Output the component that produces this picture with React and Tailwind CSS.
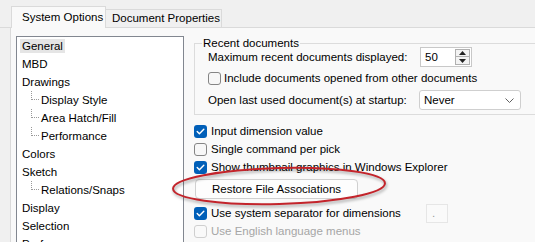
import React from 'react';

const treeItems = [
  { label: 'General', selected: true },
  { label: 'MBD' },
  { label: 'Drawings' },
  { label: 'Display Style', sub: true },
  { label: 'Area Hatch/Fill', sub: true },
  { label: 'Performance', sub: true },
  { label: 'Colors' },
  { label: 'Sketch' },
  { label: 'Relations/Snaps', sub: true },
  { label: 'Display' },
  { label: 'Selection' },
  { label: 'Performance' },
  { label: 'Assemblies' },
];

const CheckBox = ({ checked, disabled }) => {
  if (checked) {
    return (
      <span className="w-[13px] h-[13px] rounded-[3px] bg-[#005fb8] flex items-center justify-center shrink-0">
        <svg width="13" height="13" viewBox="0 0 13 13">
          <path d="M3.2 6.6 L5.4 8.8 L9.8 4.2" fill="none" stroke="white" strokeWidth="1.4" strokeLinecap="round" strokeLinejoin="round" />
        </svg>
      </span>
    );
  }
  return (
    <span
      className={
        disabled
          ? 'w-[13px] h-[13px] rounded-[3px] border border-[#cfcfcf] bg-[#f9f9f9] shrink-0'
          : 'w-[13px] h-[13px] rounded-[3px] border border-[#858585] bg-[#f7f7f7] shrink-0'
      }
    />
  );
};

const CheckRow = ({ checked, disabled, children }) => (
  <div className="h-[18px] flex items-center">
    <CheckBox checked={checked} disabled={disabled} />
    <span className={disabled ? 'ml-[4px] text-[#a6a6a6] whitespace-nowrap' : 'ml-[4px] whitespace-nowrap'}>{children}</span>
  </div>
);

const TreeRow = ({ item }) => {
  if (item.sub) {
    return (
      <div className="h-[18px] flex items-center pl-[14px]">
        <span className="w-[8px] h-[9px] self-start border-l border-b border-dotted border-[#9a9a9a]" />
        <span className="px-[2px] whitespace-nowrap">{item.label}</span>
      </div>
    );
  }
  return (
    <div className="h-[18px] flex items-center pl-[3px]">
      <span className={item.selected ? 'px-[2px] leading-[14px] bg-[#e5e5e5] whitespace-nowrap' : 'px-[2px] whitespace-nowrap'}>
        {item.label}
      </span>
    </div>
  );
};

export default function App() {
  return (
    <div className="relative w-[535px] h-[242px] overflow-hidden bg-[#f0f0f0] text-[11.5px] leading-[18px] text-[#000] font-['Liberation_Sans',Arial,sans-serif]">
      {/* tabs */}
      <div className="flex items-end pl-[11px] h-[28px] border-b border-[#dadada]">
        <div className="relative -mb-px w-[95px] h-[22px] pl-[10px] pt-[1px] bg-[#f9f9f9] border border-b-0 border-[#dadada] whitespace-nowrap">
          System Options
        </div>
        <div className="w-[116px] h-[18px] pl-[6px] leading-[17px] bg-[#f0f0f0] border border-l-0 border-b-0 border-[#dadada] whitespace-nowrap">
          Document Properties
        </div>
      </div>

      {/* panel */}
      <div className="ml-[10px] h-[220px] border-l border-[#dadada] bg-[#f9f9f9] flex pt-[8px] pl-[5px]">
        <div className="w-[168px] h-[230px] shrink-0 border border-[#828790] bg-white overflow-hidden">
          {treeItems.map((item, i) => (
            <TreeRow key={i} item={item} />
          ))}
        </div>

        <div className="ml-[10px] w-[360px] shrink-0">
          <fieldset className="mt-[1px] border border-[#dcdcdc] pb-[4px]">
            <legend className="ml-[7px] px-[1px] leading-[12px]">Recent documents</legend>
            <div className="-mt-[2px] pl-[13px]">
              <div className="h-[20px] flex items-center">
                <span className="w-[212px] whitespace-nowrap">Maximum recent documents displayed:</span>
                <div className="w-[52px] h-[20px] flex border border-[#c8c8c8] bg-white">
                  <span className="flex-1 pl-[4px] leading-[18px]">50</span>
                  <div className="w-[16px] flex flex-col py-[1px] pr-[1px]">
                    <span className="h-[9px] border border-[#b0b0b0] bg-[#f3f3f3] flex items-center justify-center">
                      <svg width="7" height="4" viewBox="0 0 7 4"><path d="M0 4 L3.5 0 L7 4 Z" fill="#222" /></svg>
                    </span>
                    <span className="h-[9px] border border-t-0 border-[#b0b0b0] bg-[#f3f3f3] flex items-center justify-center">
                      <svg width="7" height="4" viewBox="0 0 7 4"><path d="M0 0 L3.5 4 L7 0 Z" fill="#222" /></svg>
                    </span>
                  </div>
                </div>
              </div>
              <div className="mt-[1px] h-[20px] flex items-center">
                <CheckBox />
                <span className="ml-[3px] whitespace-nowrap">Include documents opened from other documents</span>
              </div>
              <div className="mt-[2px] h-[20px] flex items-center">
                <span className="w-[211px] whitespace-nowrap">Open last used document(s) at startup:</span>
                <div className="w-[102px] h-[20px] flex items-center justify-between pl-[4px] pr-[6px] border border-[#cfcfcf] rounded-[3px] bg-white">
                  <span>Never</span>
                  <svg width="9" height="5" viewBox="0 0 9 5">
                    <path d="M0.5 0.5 L4.5 4.5 L8.5 0.5" fill="none" stroke="#606060" strokeWidth="1" />
                  </svg>
                </div>
              </div>
            </div>
          </fieldset>

          <div className="mt-[7px]">
            <CheckRow checked>Input dimension value</CheckRow>
            <CheckRow>Single command per pick</CheckRow>
            <CheckRow checked>Show thumbnail graphics in Windows Explorer</CheckRow>
            <div className="mt-[3px] ml-[1px] w-[163px] h-[20px] flex items-center justify-center rounded-[4px] border border-[#d0d0d0] bg-[#fdfdfd] whitespace-nowrap">
              Restore File Associations
            </div>
            <div className="mt-[5px] h-[18px] flex items-center">
              <div className="w-[232px] flex items-center">
                <CheckBox checked />
                <span className="ml-[4px] whitespace-nowrap">Use system separator for dimensions</span>
              </div>
              <div className="w-[22px] h-[19px] border border-[#e6e6e6] bg-[#fafafa] text-[#9a9a9a] pl-[5px] leading-[16px]">.</div>
            </div>
            <CheckRow disabled>Use English language menus</CheckRow>
          </div>
        </div>
      </div>

      {/* red annotation ellipse */}
      <svg className="absolute left-[167px] top-[162px] drop-shadow-[1px_2px_1.5px_rgba(0,0,0,0.35)]" width="226" height="50" viewBox="0 0 226 50">
        <ellipse cx="112" cy="24" rx="106" ry="18" fill="none" stroke="#c3242b" strokeWidth="2" transform="rotate(-1.5 112 24)" />
      </svg>
    </div>
  );
}
